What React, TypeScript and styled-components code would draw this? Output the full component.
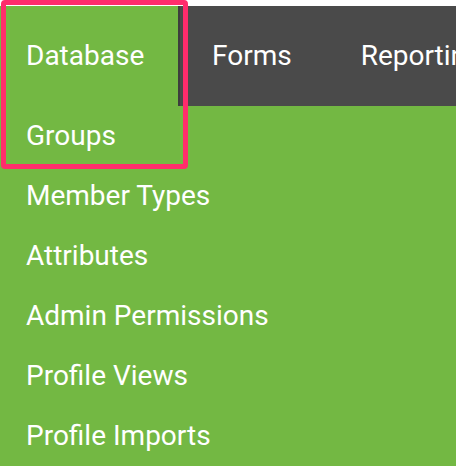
import styled, { createGlobalStyle } from 'styled-components';

const GlobalStyle = createGlobalStyle`
  html, body, #root {
    margin: 0;
    padding: 0;
    background: #ffffff;
  }
  body {
    font-family: Roboto, 'Liberation Sans', Arial, sans-serif;
    overflow: hidden;
  }
`;

const GREEN = '#73b843';
const DARK = '#4a4a4a';

const Page = styled.div`
  position: relative;
  width: 456px;
  height: 472px;
  padding: 6px 0;
  box-sizing: border-box;
`;

const NavBar = styled.nav`
  display: flex;
  height: 100px;
  background: ${DARK};
  overflow: hidden;
  white-space: nowrap;
`;

const Tab = styled.div<{ $active?: boolean }>`
  display: flex;
  align-items: center;
  flex-shrink: 0;
  box-sizing: border-box;
  padding: 0 37px 2px 32px;
  font-size: 28px;
  color: #ffffff;
  background: transparent;

  &:first-child {
    width: 180px;
    padding: 0 0 2px 26px;
  }

  ${(p) =>
    p.$active &&
    `
    background: ${GREEN};
    border-right: 2px solid #3d3d3d;
  `}
`;

const Menu = styled.ul`
  list-style: none;
  margin: 0;
  padding: 0;
  background: ${GREEN};
`;

const MenuItem = styled.li`
  display: flex;
  align-items: center;
  box-sizing: border-box;
  height: 60px;
  padding: 0 0 2px 26px;
  font-size: 28px;
  color: #ffffff;
`;

// annotation box drawn over the screenshot
const Highlight = styled.div`
  position: absolute;
  left: 1px;
  top: 0;
  width: 187px;
  height: 169px;
  box-sizing: border-box;
  border: 5px solid #fe2c6c;
  border-radius: 4px;
  pointer-events: none;
`;

const tabs = ['Database', 'Forms', 'Reporting'];
const items = ['Groups', 'Member Types', 'Attributes', 'Admin Permissions', 'Profile Views', 'Profile Imports'];

const App = () => (
  <>
    <GlobalStyle />
    <Page>
      <NavBar>
        {tabs.map((t, i) => (
          <Tab key={t} $active={i === 0}>
            {t}
          </Tab>
        ))}
      </NavBar>
      <Menu>
        {items.map((it) => (
          <MenuItem key={it}>{it}</MenuItem>
        ))}
      </Menu>
      <Highlight />
    </Page>
  </>
);

export default App;
